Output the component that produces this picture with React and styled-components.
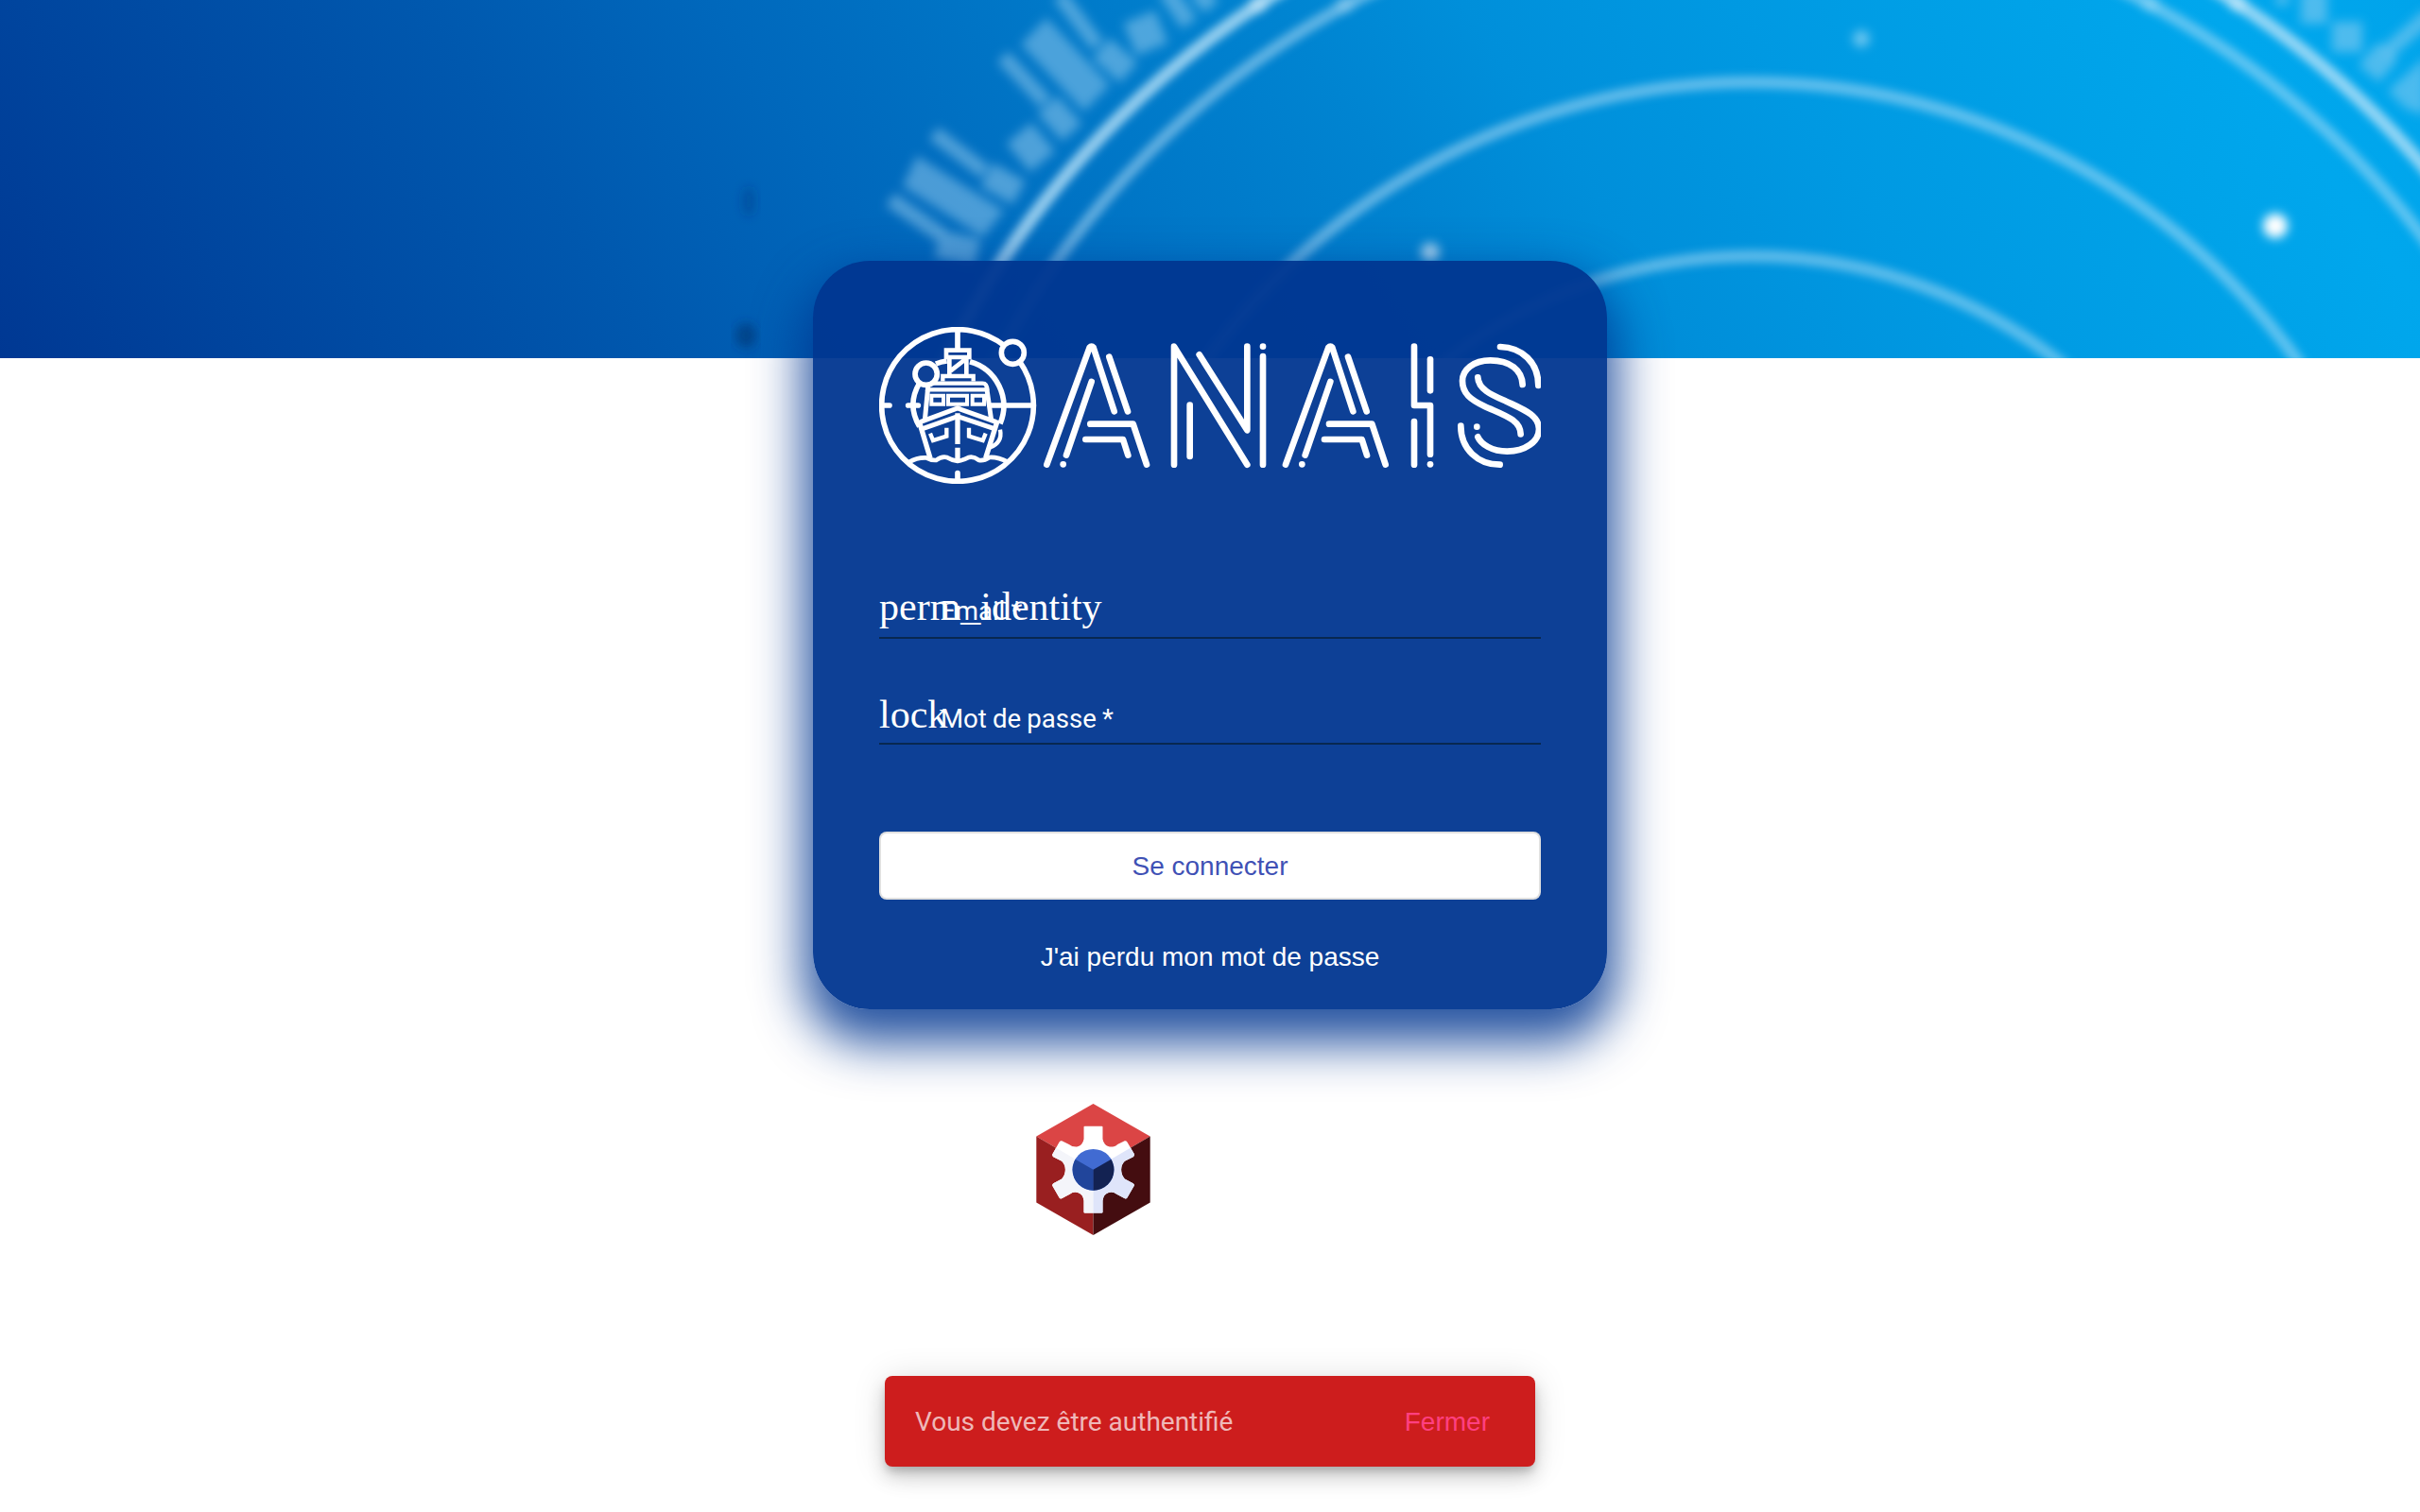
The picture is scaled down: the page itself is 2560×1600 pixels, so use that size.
import React from 'react';
import styled, { createGlobalStyle } from 'styled-components';

const GlobalStyle = createGlobalStyle`
  html, body { margin: 0; padding: 0; background: #fff; }
  * { box-sizing: border-box; }
`;

const Page = styled.main`
  height: 1600px;
  overflow: hidden;
  display: flex;
  flex-direction: column;
  align-items: center;
  background: #fff;
  font-family: Roboto, "Liberation Sans", sans-serif;
  font-size: 28px;
`;

const Hero = styled.header`
  width: 100%;
  height: 379px;
  flex: none;
  overflow: hidden;
  background: linear-gradient(
    55deg,
    #003893 0%,
    #00459e 10%,
    #0058ae 25%,
    #0068bc 36%,
    #0074c5 45%,
    #0084d1 57%,
    #008fda 64%,
    #0099e2 74%,
    #00a2e8 85%,
    #00a7ed 92%,
    #00a4eb 100%
  );
`;

const HeroArt = styled.svg`
  display: block;
  width: 100%;
  height: 100%;
`;

const Card = styled.section`
  position: relative;
  width: 840px;
  height: 792px;
  margin-top: -103px;
  padding: 70px;
  flex: none;
  display: flex;
  flex-direction: column;
  border-radius: 60px;
  background: rgba(0, 54, 144, 0.95);
  box-shadow: 0 26px 52px 10px rgba(0, 54, 144, 0.85);
`;

const Brand = styled.svg`
  display: block;
  width: 700px;
  height: 166px;
  flex: none;
  margin-bottom: 96px;
`;

const Field = styled.label`
  display: flex;
  flex: none;
  align-items: baseline;
  height: ${(p) => p.$height}px;
  margin-bottom: ${(p) => p.$gap}px;
  border-bottom: 2px solid #082850;
  color: #fff;
  white-space: nowrap;
`;

const Glyph = styled.span`
  width: 65px;
  flex: none;
  font-family: "Liberation Serif", serif;
  font-size: 42px;
  line-height: 68px;
`;

const FieldName = styled.span`
  font-size: 27.6px;
  word-spacing: -0.7px;
`;

const SubmitButton = styled.button`
  flex: none;
  height: 72px;
  width: 100%;
  padding: 2px 0 0;
  border: 2px solid rgba(0, 0, 0, 0.12);
  border-radius: 8px;
  background: #fff;
  color: #3f51b5;
  font: 28px "Liberation Sans", Arial, sans-serif;
`;

const LostLink = styled.a`
  flex: none;
  margin-top: 44px;
  text-align: center;
  color: #fff;
  font: 28px/34px "Liberation Sans", Arial, sans-serif;
`;

const CompanyMark = styled.svg`
  display: block;
  width: 121px;
  height: 139px;
  flex: none;
  margin: 100px 247px 0 0;
`;

const Snackbar = styled.aside`
  width: 688px;
  height: 96px;
  flex: none;
  margin-top: 149px;
  padding: 0 48px 0 32px;
  display: flex;
  align-items: center;
  justify-content: space-between;
  border-radius: 8px;
  background: #cd1d1d;
  color: rgba(255, 255, 255, 0.7);
  box-shadow:
    0 6px 10px -2px rgba(0, 0, 0, 0.2),
    0 12px 20px rgba(0, 0, 0, 0.14),
    0 2px 36px rgba(0, 0, 0, 0.12);
`;

const DismissButton = styled.button`
  border: 0;
  padding: 2px 0 0;
  background: none;
  color: #ff4081;
  font: 28px "Liberation Sans", Arial, sans-serif;
`;

function RadarArt() {
  return (
    <HeroArt viewBox="0 0 2560 379" aria-hidden="true">
      <defs>
        <filter id="soft" x="-5%" y="-5%" width="110%" height="110%">
          <feGaussianBlur stdDeviation="4" />
        </filter>
        <filter id="softer" x="-20%" y="-20%" width="140%" height="140%">
          <feGaussianBlur stdDeviation="5.5" />
        </filter>
      </defs>
      <g fill="none" stroke="#b9e2f7" filter="url(#soft)">
        <circle cx="1850" cy="795" r="945" strokeWidth="14" strokeOpacity="0.78" />
        <circle cx="1850" cy="795" r="897" strokeWidth="13" strokeOpacity="0.5" />
        <circle cx="1853" cy="800" r="713" strokeWidth="13" strokeOpacity="0.5" />
        <circle cx="1853" cy="800" r="529" strokeWidth="13" strokeOpacity="0.48" />
      </g>
      <g fill="#a3d4f1" stroke="#a3d4f1" fillOpacity="0.46" strokeOpacity="0" filter="url(#softer)">
        <polygon points="970,165 955,197 1040,251 1062,223" />
        <polygon points="1107,19 1080,47 1147,118 1174,90" />
        <polygon points="2526,96 2566,60 2566,122 2545,115" />
        <g fill="none" strokeOpacity="0.48">
          <path d="M942 211 L996 249" strokeWidth="16" />
          <path d="M992 258 L1034 268" strokeWidth="30" />
          <path d="M988 141 L1042 182" strokeWidth="16" />
          <path d="M1044 185 L1078 204" strokeWidth="28" />
          <path d="M1078 141 L1103 171" strokeWidth="34" />
          <path d="M1061 60 L1106 108" strokeWidth="16" />
          <path d="M1108 111 L1134 140" strokeWidth="28" />
          <path d="M1121 -5 L1161 48" strokeWidth="16" />
          <path d="M1165 51 L1194 77" strokeWidth="28" />
          <path d="M1205 18 L1219 52" strokeWidth="36" />
          <path d="M1234 -10 L1258 25" strokeWidth="19" />
          <path d="M1266 -10 L1282 7" strokeWidth="20" />
          <path d="M2413 -6 L2416 5" strokeWidth="14" />
          <path d="M2448 -10 L2448 25" strokeWidth="28" />
          <path d="M2483 23 L2483 55" strokeWidth="32" />
          <path d="M2506 78 L2526 54" strokeWidth="28" />
          <path d="M2524 56 L2570 16" strokeWidth="16" />
        </g>
      </g>
      <g fill="#fff" filter="url(#softer)">
        <circle cx="1331" cy="4" r="9" fillOpacity="0.35" />
        <circle cx="2367" cy="3" r="9" fillOpacity="0.35" />
        <circle cx="1422" cy="4" r="9" fillOpacity="0.22" />
        <circle cx="2275" cy="3" r="9" fillOpacity="0.22" />
        <ellipse cx="1969" cy="41" rx="9" ry="9" fillOpacity="0.42" />
        <circle cx="1513" cy="267" r="10" fillOpacity="0.65" />
        <circle cx="2407" cy="239" r="13" />
      </g>
      <g fill="#003070" filter="url(#softer)">
        <ellipse cx="792" cy="213" rx="7" ry="16" fillOpacity="0.3" />
        <ellipse cx="789" cy="355" rx="11" ry="13" fillOpacity="0.6" />
      </g>
    </HeroArt>
  );
}

function LetterA({ x }) {
  return (
    <g transform={`translate(${x} 0)`}>
      <path d="M622 515 L758 143 Q764 136 770 143 L836 346" />
      <path d="M820 173 L879 346" />
      <path d="M764 252 L684 485" />
      <path d="M760 386 H896 L939 515" />
      <path d="M745 435 H864 L880 485" />
      <path d="M674 514 V514.1" />
    </g>
  );
}

function LetterN() {
  return (
    <g>
      <path d="M1026 515 V140 L1258 515" />
      <path d="M1106 166 L1258 406 V140" />
      <path d="M1076 326 V489" />
      <path d="M1308 171 V515" />
      <path d="M1308 140 V140.1" />
    </g>
  );
}

function LetterI() {
  return (
    <g>
      <path d="M1788 140 V327 H1839 V482" />
      <path d="M1839 181 V280" />
      <path d="M1788 378 V515" />
      <path d="M1839 514 V514.1" />
    </g>
  );
}

function LetterS() {
  return (
    <g>
      <path d="M2132 261 C2130 215 2092 184 2030 184 C1975 184 1941 214 1941 249 C1941 290 1968 309 2010 329 C2070 357 2125 371 2126 418" />
      <path d="M1990 238 C1992 278 2040 296 2080 314 C2135 340 2184 358 2184 402 C2184 442 2140 473 2083 473 C2035 473 2000 450 1990 427" />
      <path d="M2061 141 C2130 143 2182 190 2182 264" />
      <path d="M1936 392 C1936 465 1990 515 2060 515" />
      <path d="M1987 395 V395.1" />
    </g>
  );
}

function ShipEmblem() {
  return (
    <g fill="none" stroke="#fff" strokeWidth="17">
      <path d="M486.7 136.6 A241 241 0 1 0 535.9 188.1" />
      <circle cx="514" cy="160" r="36" />
      <circle cx="239" cy="227" r="35" />
      <path d="M339 80 V148 M339 542 V568 M98 327 H123 M182 327 H214 M446 327 H580" strokeLinecap="round" />
      <path d="M270 195 Q286 188 305 186 M378 188 A146 146 0 0 1 474 385 M218 256 Q177 325 218 394" />
      <path d="M474 404 Q482 446 442 460" strokeWidth="13" />
      <path d="M303 152 H376 V174 H303 Z M313 174 V228 M367 174 V228 M317 217 L362 182" strokeWidth="14" />
      <path d="M292 250 V234 H389 V250 M243 282 Q242 257 260 257 H418 Q433 257 433 280 M248 277 H430" strokeWidth="13" />
      <path d="M245 270 L235 374 M431 270 L446 374" strokeWidth="15" />
      <path d="M256 296 H294 V323 H256 Z M309 296 H369 V323 H309 Z M386 296 H423 V323 H386 Z" strokeWidth="12" />
      <path d="M222 379 L339 336 L460 379 M222 403 L339 362 L462 403" strokeWidth="15" />
      <path d="M216 374 L252 494 M466 374 L428 494" strokeWidth="16" />
      <path d="M339 352 V450 M339 461 V500" strokeWidth="16" />
      <path d="M252 416 L261 438 L304 425 V398 M428 416 L419 438 L375 425 V398" strokeWidth="13" />
      <path
        d="M185 507 Q210 492 238 493 Q254 502 271 501 Q288 488 305 492 Q322 502 339 504 Q356 502 374 492 Q390 488 405 500 Q420 505 440 492 Q465 490 500 507"
        strokeWidth="14"
      />
    </g>
  );
}

function BrandLogo() {
  return (
    <Brand viewBox="90 78 2100 498" role="img" aria-label="ANAIS">
      <ShipEmblem />
      <g fill="none" stroke="#fff" strokeWidth="20" strokeLinecap="round" strokeLinejoin="round">
        <LetterA x={0} />
        <LetterN />
        <LetterA x={758} />
        <LetterI />
        <LetterS />
      </g>
    </Brand>
  );
}

function CubeMark() {
  return (
    <CompanyMark viewBox="108 54 362 418" role="img" aria-label="Cube">
      <defs>
        <clipPath id="hub"><circle cx="289" cy="264" r="66" /></clipPath>
        <clipPath id="gear">
          <path d="M259 128 Q259 125 263 125 H315 Q319 125 319 128 V166 Q322 186 341 191 Q358 192 366 183 L389 172 Q394 171 397 176 L420 215 Q420 220 416 223 L389 237 Q378 248 378 264 Q378 281 389 293 L416 307 Q421 311 419 315 L397 353 Q393 358 388 355 L364 342 Q350 332 338 337 Q321 343 319 362 V399 Q319 402 315 402 H263 Q259 402 259 399 V362 Q257 343 240 337 Q227 332 214 342 L190 355 Q185 358 181 353 L159 315 Q158 311 162 307 L189 293 Q200 281 200 264 Q200 248 189 237 L162 223 Q158 220 159 215 L181 176 Q184 171 189 172 L212 183 Q222 192 237 191 Q256 186 259 166 Z" />
        </clipPath>
      </defs>
      <path d="M289 54 L470 158 L289 264 L108 158 Z" fill="#db4545" />
      <path d="M108 158 L289 264 V472 L108 368 Z" fill="#991f20" />
      <path d="M470 158 L289 264 V472 L470 368 Z" fill="#440d10" />
      <g clipPath="url(#gear)">
        <rect x="100" y="50" width="380" height="430" fill="#fff" />
        <path d="M108 158 L289 264 V472 L108 368 Z" fill="#f4f5fa" />
        <path d="M470 158 L289 264 V472 L470 368 Z" fill="#dfe5fa" />
      </g>
      <g clipPath="url(#hub)">
        <rect x="200" y="180" width="180" height="180" fill="#416bd2" />
        <path d="M108 158 L289 264 V472 L108 368 Z" fill="#21459b" />
        <path d="M470 158 L289 264 V472 L470 368 Z" fill="#132252" />
      </g>
    </CompanyMark>
  );
}

export default function App() {
  return (
    <Page>
      <GlobalStyle />
      <Hero><RadarArt /></Hero>
      <Card>
        <BrandLogo />
        <Field $height={68} $gap={46}>
          <Glyph>perm_identity</Glyph>
          <FieldName>Email *</FieldName>
        </Field>
        <Field $height={66} $gap={92}>
          <Glyph>lock</Glyph>
          <FieldName>Mot de passe *</FieldName>
        </Field>
        <SubmitButton type="button">Se connecter</SubmitButton>
        <LostLink>J'ai perdu mon mot de passe</LostLink>
      </Card>
      <CubeMark />
      <Snackbar role="alert">
        <span>Vous devez être authentifié</span>
        <DismissButton type="button">Fermer</DismissButton>
      </Snackbar>
    </Page>
  );
}
